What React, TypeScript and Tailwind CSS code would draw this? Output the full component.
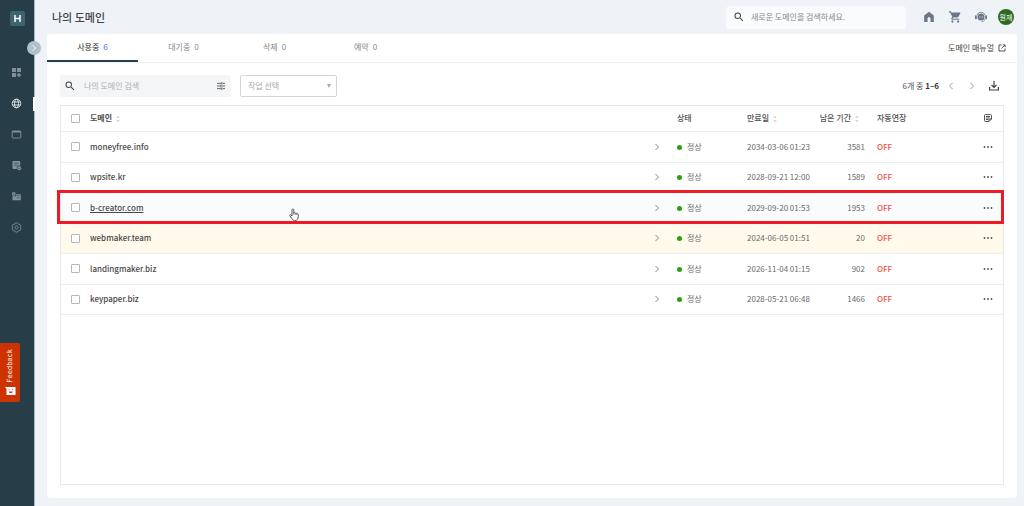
import React from 'react';

type Domain = {
  name: string;
  expires: string;
  daysLeft: number;
  hovered?: boolean;
  warning?: boolean;
};

const domains: Domain[] = [
  { name: 'moneyfree.info', expires: '2034-03-06 01:23', daysLeft: 3581 },
  { name: 'wpsite.kr', expires: '2028-09-21 12:00', daysLeft: 1589 },
  { name: 'b-creator.com', expires: '2029-09-20 01:53', daysLeft: 1953, hovered: true },
  { name: 'webmaker.team', expires: '2024-06-05 01:51', daysLeft: 20, warning: true },
  { name: 'landingmaker.biz', expires: '2026-11-04 01:15', daysLeft: 902 },
  { name: 'keypaper.biz', expires: '2028-05-21 06:48', daysLeft: 1466 },
];

const tabs = [
  { name: '사용중', count: 6, active: true },
  { name: '대기중', count: 0 },
  { name: '삭제', count: 0 },
  { name: '예약', count: 0 },
];

const SearchIcon: React.FC = () => (
  <svg className="w-3 h-3 shrink-0 text-[#444]" viewBox="0 0 24 24" fill="currentColor">
    <path d="M15.5 14h-.79l-.28-.27A6.47 6.47 0 0 0 16 9.5 6.5 6.5 0 1 0 9.5 16c1.61 0 3.09-.59 4.23-1.57l.27.28v.79l5 4.99L20.49 19zm-6 0a4.5 4.5 0 1 1 0-9 4.5 4.5 0 0 1 0 9" />
  </svg>
);

const Chevron: React.FC<{ left?: boolean }> = ({ left }) => (
  <svg className="w-2 h-2" viewBox="0 0 8 8" fill="none" stroke="currentColor" strokeWidth={1}>
    <path d={left ? 'M5.5 1 2.5 4l3 3' : 'M2.5 1l3 3-3 3'} />
  </svg>
);

const SortIcon: React.FC = () => (
  <svg className="inline w-1 h-2 ml-1 text-[#d4d6d9]" viewBox="0 0 4 8" fill="currentColor">
    <path d="M2 .5 3.8 3H.2zM2 7.5.2 5h3.6z" />
  </svg>
);

const Checkbox: React.FC<{ label: string }> = ({ label }) => (
  <input
    type="checkbox"
    aria-label={label}
    className="block appearance-none w-[9px] h-[9px] ml-[10px] border border-[#b4b8bc] rounded-[1px] bg-white"
  />
);

const navItems = [
  {
    name: '대시보드',
    icon: (
      <g fill="currentColor">
        <rect x="1" y="1" width="4" height="4" rx=".5" />
        <rect x="6" y="1" width="4" height="4" rx=".5" />
        <rect x="1" y="6" width="4" height="4" rx=".5" />
        <path d="M7.3 6h1.4v1.3H10v1.4H8.7V10H7.3V8.7H6V7.3h1.3z" />
      </g>
    ),
  },
  {
    name: '도메인',
    active: true,
    icon: (
      <g fill="none" stroke="currentColor" strokeWidth=".9">
        <circle cx="5.5" cy="5.5" r="4.3" />
        <ellipse cx="5.5" cy="5.5" rx="2" ry="4.3" />
        <path d="M1.6 4h7.8M1.6 7h7.8" />
      </g>
    ),
  },
  {
    name: '사이트',
    icon: (
      <g>
        <rect x="1.2" y="2" width="8.6" height="7" rx=".8" fill="none" stroke="currentColor" strokeWidth=".9" />
        <path d="M1.2 2h8.6v1.5H1.2z" fill="currentColor" />
      </g>
    ),
  },
  {
    name: '호스팅',
    icon: (
      <g>
        <path d="M2.2 1h6.3c.4 0 .7.3.7.7v4A2.6 2.6 0 0 0 5.8 9H2.2a.7.7 0 0 1-.7-.7V1.7c0-.4.3-.7.7-.7" fill="currentColor" />
        <path d="M3 3.2h4.7M3 5.2h3.5" stroke="#273e49" strokeWidth=".6" />
        <circle cx="8.2" cy="8.2" r="2" fill="currentColor" />
        <path d="m7.3 8.2.7.7 1.2-1.3" fill="none" stroke="#273e49" strokeWidth=".6" />
      </g>
    ),
  },
  {
    name: '결제',
    icon: (
      <g>
        <path d="M1.5 5.2h3.7V3h4.6v6.2H1.5z" fill="currentColor" />
        <circle cx="2.8" cy="3" r="1.9" fill="currentColor" />
        <path d="M5.5 4.2h4M6 6.8h2.5M2 3h1.6" stroke="#273e49" strokeWidth=".7" />
      </g>
    ),
  },
  {
    name: '설정',
    icon: (
      <g fill="none" stroke="currentColor" strokeWidth=".8">
        <path d="M4.5.9h2l.5 1.1.7.4 1.3-.1 1 1.700-.7 1v1l.7 1-1 1.700-1.300-.1-.7.4-.5 1.100h-2L4 9l-.7-.4-1.300.1-1-1.700.7-1V5l-.7-1 1-1.700 1.300.1L4 2z" />
        <circle cx="5.5" cy="5.5" r="1.6" />
      </g>
    ),
  },
];

const Sidebar: React.FC = () => (
  <aside className="relative w-[35px] shrink-0 bg-[#273e49] border-r border-[#a9b8c1]">
    <a
      href="#"
      aria-label="홈"
      className="flex items-center justify-center w-[15px] h-[15px] mt-[11px] ml-[10px] rounded-xs bg-[#3f6371]"
    >
      <svg className="w-[7px] h-[7px]" viewBox="0 0 7 7" fill="none" stroke="#fff" strokeWidth={1.5}>
        <path d="M1 0v7M6 0v7M1 3.5h5" />
      </svg>
    </a>
    <button
      aria-label="메뉴 펼치기"
      className="absolute top-[41px] left-[27px] z-10 flex items-center justify-center w-[14px] h-[14px] rounded-full bg-[#afc1cb] text-white"
    >
      <Chevron />
    </button>
    <nav className="flex flex-col mt-[31px]">
      {navItems.map((item) => (
        <a
          key={item.name}
          href="#"
          aria-label={item.name}
          className={`relative flex items-center h-[31px] pl-[11px] ${item.active ? 'text-[#e4eaed]' : 'text-[#82919a]'}`}
        >
          <svg className="w-[11px] h-[11px]" viewBox="0 0 11 11">
            {item.icon}
          </svg>
          {item.active && <span className="absolute left-[33px] w-[2px] h-[14px] bg-white" />}
        </a>
      ))}
    </nav>
    <button className="absolute top-[343px] left-0 flex flex-col items-center justify-between w-5 h-[59px] py-[6px] rounded-r-xs bg-[#cc3300] text-white">
      <span className="rotate-180 [writing-mode:vertical-rl] font-['DejaVu_Sans_Mono',monospace] text-[7px] leading-[10px]">
        Feedback
      </span>
      <svg className="w-[11px] h-[9px]" viewBox="0 0 11 9">
        <path d="M0 0h10.5v8H1.5V2z" fill="#fff" />
        <path d="M4 2.2v1M7.600 2.200v1" stroke="#cc3300" strokeWidth=".9" />
        <path d="M3.8 4.600h4c-.3 2-3.700 2-4 0z" fill="#cc3300" />
      </svg>
    </button>
  </aside>
);

const Header: React.FC = () => (
  <header className="flex items-center h-[34px] pl-[5px] pr-[3px]">
    <h1 className="text-[11px] leading-4 font-medium text-[#404448]">나의 도메인</h1>
    <label className="flex items-center gap-[6px] w-[180px] h-[23px] ml-auto px-[7px] rounded-sm bg-[#fafbfc]">
      <SearchIcon />
      <input
        type="search"
        aria-label="새로운 도메인 검색"
        placeholder="새로운 도메인을 검색하세요."
        className="min-w-0 flex-1 bg-transparent text-[8px] leading-3 outline-none placeholder:text-[#85898e]"
      />
    </label>
    <div className="flex items-center gap-[14px] ml-[17px] text-[#6b7688]">
      <a href="#" aria-label="홈">
        <svg className="w-3 h-3" viewBox="0 0 12 12" fill="currentColor">
          <path d="M6 .8 1.2 4.500V11h3.300V7.500a1.500 1.500 0 0 1 3 0V11h3.300V4.500z" />
        </svg>
      </a>
      <a href="#" aria-label="장바구니">
        <svg className="w-3 h-3" viewBox="1 2 21 20" fill="currentColor">
          <path d="M7 18a2 2 0 1 0 0 4 2 2 0 0 0 0-4M1 2v2h2l3.6 7.59-1.35 2.45C4.52 15.37 5.48 17 7 17h12v-2H7.42a.25.25 0 0 1-.25-.25l.93-1.75h7.45c.75 0 1.41-.41 1.75-1.03l3.58-6.49A1 1 0 0 0 20 4H5.21l-.94-2zM17 18a2 2 0 1 0 0 4 2 2 0 0 0 0-4" />
        </svg>
      </a>
      <a href="#" aria-label="고객센터">
        <svg className="w-3 h-3" viewBox="0 0 12 12" fill="currentColor">
          <path d="M1.9 4.2a4.3 4.3 0 0 1 8.2 0M10 8.2c-.5 1.6-1.7 2.3-3.5 2.5" fill="none" stroke="currentColor" strokeWidth=".8" />
          <rect x="0" y="4.2" width="1.8" height="4" rx=".8" />
          <rect x="10.2" y="4.2" width="1.8" height="4" rx=".8" />
          <circle cx="6" cy="6" r="3.5" />
          <path d="M4.2 6h.8m.6 0h.8m.6 0h.8" stroke="#eff3f7" strokeWidth=".8" />
        </svg>
      </a>
      <button className="w-4 h-4 -ml-[3px] rounded-full bg-[#2d6a1e] text-[7px] leading-4 text-white">원재</button>
    </div>
  </header>
);

const Toolbar: React.FC = () => (
  <div className="flex items-center h-[22px] mb-2">
    <div className="flex items-center gap-2 w-[171px] h-full pl-1 pr-[6px] rounded-xs bg-[#f4f5f6]">
      <SearchIcon />
      <input
        type="search"
        aria-label="나의 도메인 검색"
        placeholder="나의 도메인 검색"
        className="min-w-0 flex-1 bg-transparent text-[8px] leading-3 outline-none placeholder:text-[#b0b0b0]"
      />
      <button aria-label="상세 검색">
        <svg className="w-2 h-2 text-[#555]" viewBox="0 0 9 9" fill="none" stroke="currentColor" strokeWidth={1}>
          <path d="M0 1.5h5M6.5 1.5H9M0 4.5h2.5M4 4.5h5M0 7.5h5M6.5 7.5H9M5.5 0v3M3.5 3v3M5.5 6v3" />
        </svg>
      </button>
    </div>
    <div className="relative w-[97px] h-full ml-[9px]">
      <select
        aria-label="작업 선택"
        className="block w-full h-full px-[7px] appearance-none border border-[#d3d5d8] rounded-xs bg-white text-[8px] leading-3 text-[#a5a8ab]"
      >
        <option>작업 선택</option>
      </select>
      <svg className="absolute right-[6px] top-[9px] w-1 h-1 text-[#a9a9bb]" viewBox="0 0 4 4" fill="currentColor">
        <path d="M0 0h4L2 4z" />
      </svg>
    </div>
    <div className="flex items-center gap-[13px] ml-auto mr-[5px] text-[#999]">
      <p className="-mr-[5px] text-[8px] leading-3 text-[#555]">
        6개 중 <b className="text-[#333]">1–6</b>
      </p>
      <button aria-label="이전">
        <Chevron left />
      </button>
      <button aria-label="다음">
        <Chevron />
      </button>
      <button aria-label="다운로드">
        <svg className="w-[10px] h-[10px] text-[#444]" viewBox="0 0 10 10" fill="none" stroke="currentColor" strokeWidth={1.2}>
          <path d="M5 0v6M2.5 4 5 6.4 7.5 4M.6 6v3h8.8V6" />
        </svg>
      </button>
    </div>
  </div>
);

const DomainTable: React.FC = () => (
  <table className="w-full table-fixed border-collapse text-[8px] leading-3 text-[#6a6a6a]">
    <colgroup>
      <col className="w-[29px]" />
      <col />
      <col className="w-[70px]" />
      <col className="w-[66px]" />
      <col className="w-[52px]" />
      <col className="w-[107px]" />
      <col className="w-[31px]" />
    </colgroup>
    <thead>
      <tr className="h-[25px] border-b border-[#edf0f3] text-left text-[#505050]">
        <th>
          <Checkbox label="전체 선택" />
        </th>
        <th className="font-bold">
          도메인
          <SortIcon />
        </th>
        <th className="font-medium">상태</th>
        <th className="font-medium whitespace-nowrap">
          만료일
          <SortIcon />
        </th>
        <th className="pr-[6px] text-right font-medium whitespace-nowrap">
          남은 기간
          <SortIcon />
        </th>
        <th className="pl-3 font-medium">자동연장</th>
        <th>
          <button aria-label="메모" className="block mx-auto">
            <svg className="w-2 h-2" viewBox="0 0 8 8" fill="none" stroke="currentColor" strokeWidth={1}>
              <path d="M1.5.6h5a1 1 0 0 1 1 1V5L5 7.5H1.5a1 1 0 0 1-1-1v-5a1 1 0 0 1 1-.9M7.5 5H5v2.5M2 2.5h4M2 4h3.500M2 5.500h2" />
            </svg>
          </button>
        </th>
      </tr>
    </thead>
    <tbody>
      {domains.map((domain) => (
        <tr
          key={domain.name}
          className={`relative h-[31px] even:h-[30px] border-b border-[#edf0f3] ${
            domain.hovered ? 'bg-[#fafbfd]' : domain.warning ? 'bg-[#fffaec]' : ''
          }`}
        >
          <td>
            <Checkbox label={domain.name} />
            {domain.hovered && (
              <>
                <span className="absolute -left-1 -right-px -inset-y-[2px] z-10 border-3 border-[#ed1c24] pointer-events-none" />
                <svg className="absolute left-[228px] top-4 z-10 w-[10px] h-[13px]" viewBox="0 0 10 13">
                  <path
                    d="M3 8V1.5a1 1 0 0 1 1.8 0V5c.4-.5 1.3-.3 1.5.2.5-.4 1.2-.1 1.4.4.7-.3 1.5.1 1.5.8v2.5c0 2-1 3.5-3 3.5H5.5c-1.2 0-1.8-.6-2.4-1.6L.8 7.8c-.5-.9.5-1.5 1.2-.8z"
                    fill="#fff"
                    stroke="#444"
                    strokeWidth=".9"
                  />
                  <path d="M4.8 5v2M6.3 5.2V7M7.7 5.6V7" stroke="#444" strokeWidth=".6" />
                </svg>
              </>
            )}
          </td>
          <td>
            <div className="flex items-center justify-between pr-4">
              <a href="#" className={`font-medium text-[#484848] ${domain.hovered ? 'underline' : ''}`}>
                {domain.name}
              </a>
              <span className="text-[#888]">
                <Chevron />
              </span>
            </div>
          </td>
          <td>
            <span className="inline-block w-[5px] h-[5px] mr-[5px] rounded-full bg-[#2ba10f]" />
            정상
          </td>
          <td className="whitespace-nowrap">{domain.expires}</td>
          <td className="text-right">{domain.daysLeft}</td>
          <td className="pl-3 font-medium text-[#f0504c]">OFF</td>
          <td>
            <button aria-label={`${domain.name} 메뉴`} className="block mx-auto text-[#505050]">
              <svg className="w-[10px] h-2" viewBox="0 0 10 8" fill="currentColor">
                <circle cx="1.5" cy="4" r=".9" />
                <circle cx="5" cy="4" r=".9" />
                <circle cx="8.5" cy="4" r=".9" />
              </svg>
            </button>
          </td>
        </tr>
      ))}
    </tbody>
  </table>
);

const App: React.FC = () => {
  return (
    <div className="flex min-h-screen bg-[#eff3f7] font-['Noto_Sans_CJK_KR',sans-serif]">
      <Sidebar />
      <div className="flex flex-col flex-1 min-w-0 pl-3 pr-[7px] pb-2">
        <Header />
        <main className="flex flex-col flex-1 rounded-sm bg-white">
          <div className="flex items-center h-[29px] border-b border-[#f0f2f4] pr-[11px]">
            <nav className="flex h-full">
              {tabs.map((tab) => (
                <a
                  key={tab.name}
                  href="#"
                  className={`flex items-center justify-center gap-1 w-[91px] h-[28px] border-b-2 text-[8px] leading-3 ${
                    tab.active ? 'border-[#24404c] text-[#333]' : 'border-transparent text-[#85888c]'
                  }`}
                >
                  {tab.name}
                  <span className={tab.active ? 'text-[#4b6bf5]' : ''}>{tab.count}</span>
                </a>
              ))}
            </nav>
            <a href="#" className="flex items-center gap-1 ml-auto text-[8px] leading-3 text-[#444]">
              도메인 매뉴얼
              <svg className="w-2 h-2" viewBox="0 0 8 8" fill="none" stroke="currentColor" strokeWidth={0.9}>
                <path d="M3.5 1H1v6h6V4.5M4.7.9h2.4v2.4M7 1 3.5 4.5" />
              </svg>
            </a>
          </div>
          <div className="flex flex-col flex-1 px-[13px] pt-3 pb-[13px]">
            <Toolbar />
            <div className="flex-1 border border-[#e6e8eb]">
              <DomainTable />
            </div>
          </div>
        </main>
      </div>
    </div>
  );
};

export default App;
